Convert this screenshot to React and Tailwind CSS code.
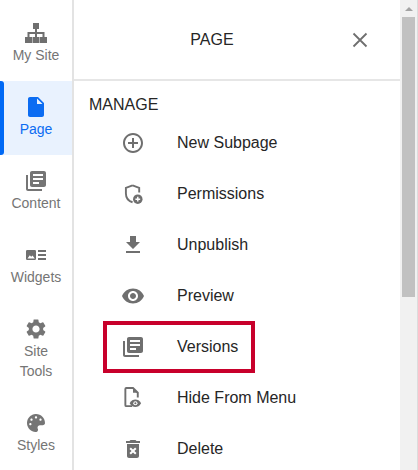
import React from "react";
import { FaPalette } from "react-icons/fa";
import { MdInsertDriveFile, MdLibraryBooks, MdSettings, MdAddCircleOutline, MdFileDownload, MdVisibility, MdDeleteForever } from "react-icons/md";

const Sitemap = () => (
  <svg width="22" height="20" viewBox="0 0 22 20" fill="#6f6f6f">
    <rect x="8" y="0" width="6" height="6" />
    <rect x="0" y="14" width="7" height="6" />
    <rect x="7.500" y="14" width="7" height="6" />
    <rect x="15" y="14" width="7" height="6" />
    <path d="M10 6h2v3h7.500v5h-2v-3H12v3h-2v-3H4.500v3h-2V9H10z" />
  </svg>
);

const Widgets = () => (
  <svg width="20" height="10" viewBox="0 0 20 10" fill="#6f6f6f">
    <path d="M1.200 0h7.600A1.200 1.200 0 0 1 10 1.200v7.600A1.200 1.200 0 0 1 8.800 10H1.200A1.200 1.200 0 0 1 0 8.800V1.200A1.200 1.200 0 0 1 1.200 0z" />
    <path d="M1.500 8.500 3.800 5.200l1.400 1.600L6.500 5.500 8.800 8.500z" fill="#fff" />
    <rect x="12" y="0" width="8" height="2" />
    <rect x="12" y="4" width="8" height="2" />
    <rect x="12" y="8" width="8" height="2" />
  </svg>
);

const ShieldPlus = () => (
  <svg width="19" height="20" viewBox="0 0 20 21" fill="none">
    <path d="M9 1.500 2 4v6c0 4.400 3 8 7 9.200M9 1.500 16 4v5" stroke="#6f6f6f" strokeWidth="2" />
    <circle cx="14.500" cy="16" r="5" fill="#6f6f6f" />
    <path d="M14.500 13.500v5M12 16h5" stroke="#fff" strokeWidth="1.500" />
  </svg>
);

const FileEye = () => (
  <svg width="20" height="21" viewBox="0 0 20 22" fill="none">
    <path d="M9 20H3a1 1 0 0 1-1-1V2a1 1 0 0 1 1-1h7l5 5v5" stroke="#6f6f6f" strokeWidth="2" />
    <path d="M10 1v5h5z" fill="#6f6f6f" />
    <path d="M6.500 17c1.500-3 3.800-4 6-4s4.500 1 6 4c-1.500 3-3.800 4-6 4s-4.500-1-6-4z" fill="#6f6f6f" />
    <circle cx="12.500" cy="17" r="2.200" fill="#fff" />
    <circle cx="12.500" cy="17" r="1.100" fill="#6f6f6f" />
  </svg>
);

const CloseX = () => (
  <svg width="16" height="16" viewBox="0 0 16 16" stroke="#6f6f6f" strokeWidth="1.800">
    <path d="M1.500 1.500l13 13M14.500 1.500l-13 13" />
  </svg>
);

function NavItem({ icon, label, active, className }) {
  return (
    <div className={`relative flex flex-col items-center shrink-0 ${className} ${active ? "bg-[#e9f2fe] text-[#0b6cf2]" : "text-[#757575]"}`}>
      {active && <div className="absolute left-0 top-0 bottom-0 w-1 rounded-r-[3px] bg-[#0069f5]" />}
      {icon}
      {label}
    </div>
  );
}

function Row({ icon, label, children }) {
  return (
    <div className="relative h-[51px] flex items-center shrink-0">
      <div className="w-[103px] pl-[15px] flex justify-center shrink-0 text-[#6f6f6f]">{icon}</div>
      <span className="text-[16px] leading-5 text-[#262626]">{label}</span>
      {children}
    </div>
  );
}

export default function App() {
  return (
    <div className="w-[418px] h-[470px] overflow-hidden bg-white flex font-['Liberation_Sans',Arial,sans-serif]">
      <div className="w-[74px] shrink-0 border-r-2 border-[#e3e3e3] flex flex-col">
        <NavItem className="h-[81px] pt-[23px]" icon={<Sitemap />} label={<div className="mt-[2px] text-[14px] leading-5">My Site</div>} />
        <NavItem active className="h-[74px] pt-[14px]" icon={<MdInsertDriveFile size={24} />} label={<div className="text-[14px] leading-5">Page</div>} />
        <NavItem className="h-[74px] pt-[14px]" icon={<MdLibraryBooks size={24} />} label={<div className="text-[14px] leading-5">Content</div>} />
        <NavItem className="h-[74px] pt-[21px]" icon={<Widgets />} label={<div className="mt-[7px] text-[14px] leading-5">Widgets</div>} />
        <NavItem className="h-[94px] pt-[14px]" icon={<MdSettings size={24} />} label={<div className="text-[14px] leading-5 text-center">Site<br />Tools</div>} />
        <NavItem className="h-[73px] pt-[17px]" icon={<FaPalette size={18} />} label={<div className="mt-[3px] text-[14px] leading-5">Styles</div>} />
      </div>
      <div className="w-[326px] shrink-0 flex flex-col">
        <div className="relative h-[81px] shrink-0 border-b-2 border-[#e6e6e6] pr-[50px] flex items-center justify-center">
          <span className="text-[16px] text-[#262626]">PAGE</span>
          <div className="absolute right-[32px] top-[32px]"><CloseX /></div>
        </div>
        <div className="pl-[15px] pt-[14px] h-[36px] shrink-0 text-[16px] leading-5 text-[#262626]">MANAGE</div>
        <Row icon={<MdAddCircleOutline size={24} />} label="New Subpage" />
        <Row icon={<ShieldPlus />} label="Permissions" />
        <Row icon={<MdFileDownload size={24} />} label="Unpublish" />
        <Row icon={<MdVisibility size={24} />} label="Preview" />
        <Row icon={<MdLibraryBooks size={24} />} label="Versions">
          <div className="absolute left-[29px] top-0 w-[152px] h-[52px] border-[4px] border-[#c8002b]" />
        </Row>
        <Row icon={<FileEye />} label="Hide From Menu" />
        <Row icon={<MdDeleteForever size={24} />} label="Delete" />
      </div>
      <div className="w-[17px] bg-[#f1f1f1] flex flex-col items-center shrink-0">
        <div className="h-[17px] flex items-center justify-center">
          <div className="w-0 h-0 border-x-[4px] border-x-transparent border-b-[4px] border-b-[#a3a3a3]" />
        </div>
        <div className="w-[13px] h-[280px] bg-[#c1c1c1]" />
      </div>
      <div className="w-[1px] bg-[#dcdcdc]" />
    </div>
  );
}
